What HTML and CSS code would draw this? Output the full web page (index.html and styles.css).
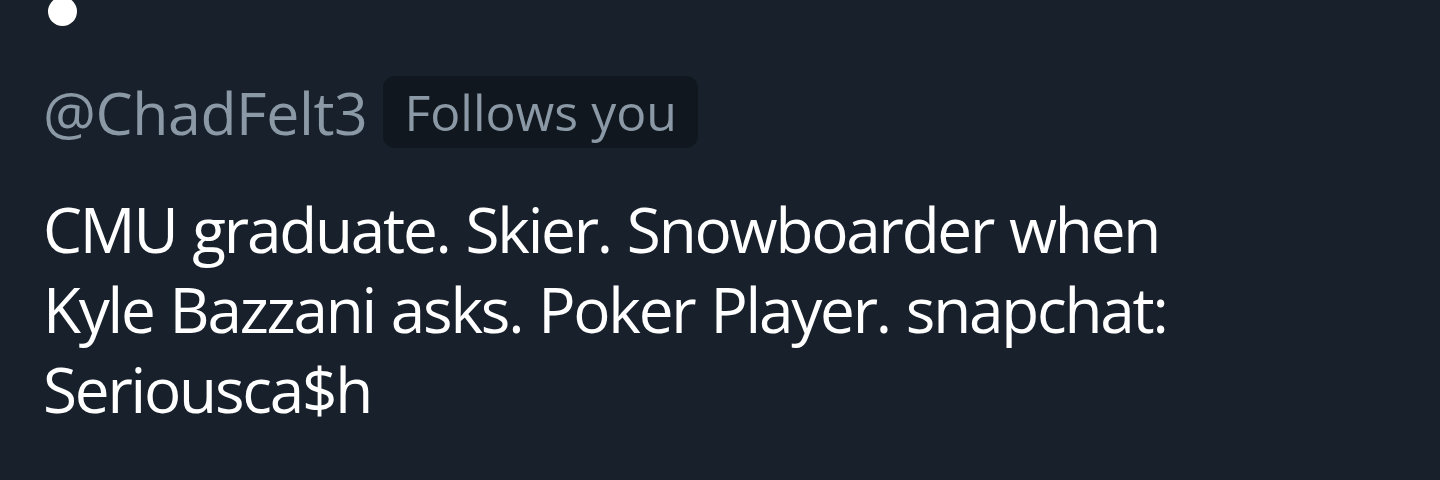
FILE: index.html
```html
<!DOCTYPE html>
<html>
<head>
<meta charset="utf-8">
<link rel="stylesheet" href="styles.css">
</head>
<body>
<div class="profile">
  <div class="dot"></div>
  <div class="handle-row">
    <span class="handle">@ChadFelt3</span>
    <span class="badge">Follows you</span>
  </div>
  <p class="bio">CMU graduate. Skier. Snowboarder when<br>Kyle Bazzani asks. Poker Player. snapchat:<br>Seriousca$h</p>
</div>
</body>
</html>
```
FILE: styles.css
```css
html, body {
  margin: 0;
  padding: 0;
  background: #17202b;
  height: 100%;
  overflow: hidden;
}
.profile {
  padding-left: 43px;
  font-family: "Open Sans", "Noto Sans", sans-serif;
}
.dot {
  width: 29px;
  height: 29px;
  border-radius: 50%;
  background: #ffffff;
  margin-left: 5px;
  margin-top: -3px;
}
.handle-row {
  display: flex;
  align-items: center;
  gap: 16px;
  margin-top: 50px;
}
.handle {
  font-size: 59px;
  line-height: 72px;
  color: #8b98a5;
  letter-spacing: -0.4px;
}
.badge {
  font-size: 50px;
  line-height: 72px;
  color: #8b98a5;
  background: #10171e;
  border-radius: 12px;
  padding: 0 21px;
}
.bio {
  margin: 41px 0 0;
  font-size: 62px;
  letter-spacing: -2.2px;
  word-spacing: 2px;
  line-height: 80px;
  color: #ffffff;
}
```
